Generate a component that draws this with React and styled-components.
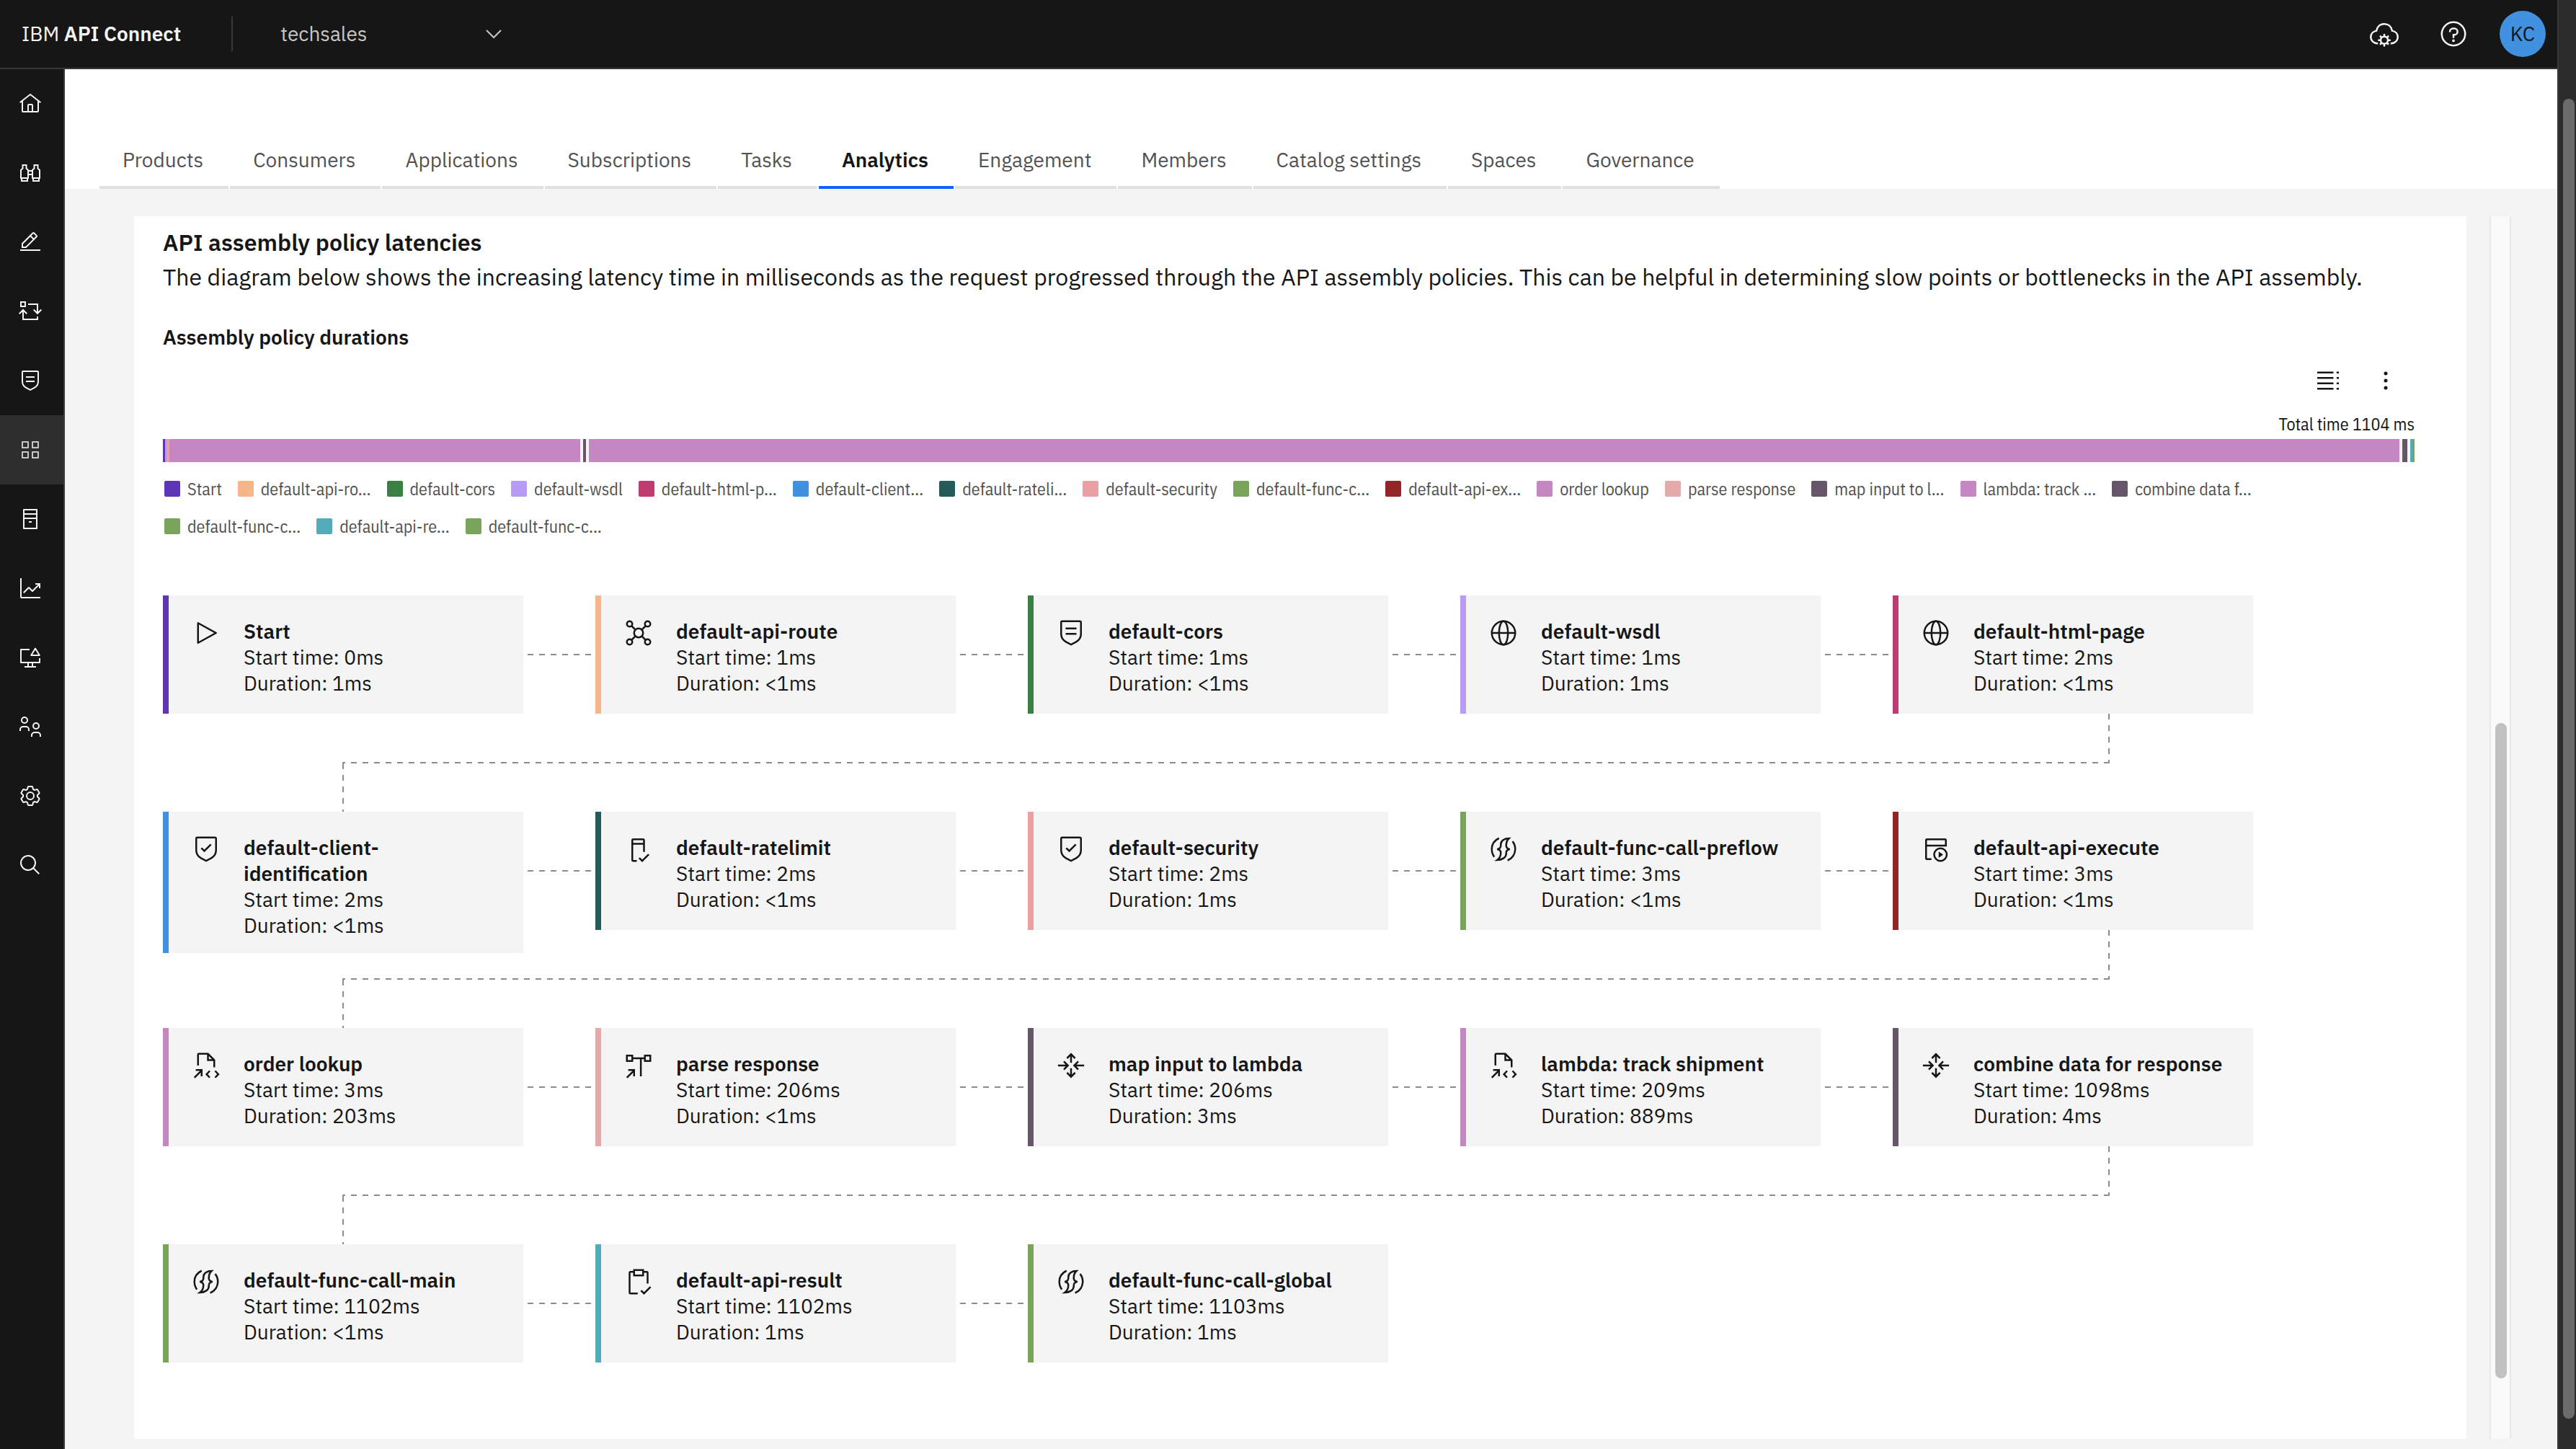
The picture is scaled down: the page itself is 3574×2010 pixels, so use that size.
import React from 'react';
import styled, { createGlobalStyle, css } from 'styled-components';

const color = {
  ink: '#161616',
  muted: '#525252',
  line: '#8d8d8d',
  surface: '#f4f4f4',
  shellBorder: '#393939',
  accent: '#0f62fe',
};

const condensed = '"IBM Plex Sans Condensed", "Open Sans", "Noto Sans", sans-serif';

const GlobalStyle = createGlobalStyle`
  *, *::before, *::after { box-sizing: border-box; }
  body {
    margin: 0;
    background: ${color.surface};
    color: ${color.ink};
    font-family: "IBM Plex Sans", "Open Sans", "Noto Sans", sans-serif;
    font-size: 28px;
    line-height: 36px;
  }
  button, select { font: inherit; color: inherit; background: none; border: 0; padding: 0; margin: 0; cursor: pointer; }
  h2, h3, p, ul, ol { margin: 0; padding: 0; list-style: none; }
`;

/* ---------- icons ---------- */

const Svg = styled.svg`
  display: block;
  flex: none;
  width: ${(p) => p.$size}px;
  height: ${(p) => p.$size}px;
  fill: none;
  stroke: currentColor;
  stroke-width: 2;
  & .solid { fill: currentColor; stroke: none; }
`;

const shield = (
  <path className="solid" d="M16,30,9.8242,26.7071A10.9819,10.9819,0,0,1,4,17V4A2.0021,2.0021,0,0,1,6,2H26a2.0021,2.0021,0,0,1,2,2V17a10.9819,10.9819,0,0,1-5.8242,9.7071ZM6,4V17a8.9852,8.9852,0,0,0,4.7656,7.9423L16,27.7333l5.2344-2.791A8.9852,8.9852,0,0,0,26,17V4Z" />
);

const icons = {
  home: <path className="solid" d="M16.6123,2.2138a1.01,1.01,0,0,0-1.2427,0L1,13.4194l1.2427,1.5717L4,13.6208V26a2.0041,2.0041,0,0,0,2,2H26a2.0037,2.0037,0,0,0,2-2V13.63L29.7573,15,31,13.4282ZM18,26H14V18h4Zm2,0V18a2.0023,2.0023,0,0,0-2-2H14a2.002,2.002,0,0,0-2,2v8H6V12.0615l10-7.79,10,7.8005V26Z" />,
  binoculars: <path d="M5.5 9.5V5h5v4.5L13 12v11H3V12zM26.500 9.500V5h-5v4.500L19 12v11h10V12zM4 23v4h8v-4M20 23v4h8v-4M13 13h6M13 18h6" />,
  edit: (
    <>
      <path className="solid" d="M2,26H30v2H2z" />
      <path className="solid" d="M25.4,9c.8-.8.8-2,0-2.8l-3.6-3.6c-.8-.8-2-.8-2.8,0L4,17.6V24h6.4ZM20.4,4,24,7.6l-3,3L17.4,7ZM6,22V18.4l10-10L19.6,12l-10,10Z" />
    </>
  ),
  cycle: <path d="M3 3h6v6H3zM13 6h13v13M20.700 13.500l5.300 5.300 5.300-5.300M26 23v4H6V14M.700 19.300L6 14l5.300 5.300" />,
  policy: (
    <>
      {shield}
      <path d="M10 11h12M10 17h12" />
    </>
  ),
  apps: <path strokeLinejoin="round" d="M5 5h8v8H5zM19 5h8v8h-8zM5 19h8v8H5zM19 19h8v8h-8z" />,
  catalog: <path strokeLinejoin="round" d="M7 3h18v26H7zM7 9h18M7 15h18M14 20h4" />,
  analytics: (
    <>
      <path className="solid" d="M4,2H2V28a2,2,0,0,0,2,2H30V28H4Z" />
      <path className="solid" d="M30,9H23v2h3.590L19,18.590,14.710,14.290a1,1,0,0,0-1.420,0L6,21.590,7.410,23,14,16.410l4.290,4.300a1,1,0,0,0,1.420,0L28,12.410V16h2Z" />
    </>
  ),
  monitor: <path strokeLinejoin="round" d="M15 5H3v18h26v-6M23 3.500L17.200 13h11.600zM13 23v6M19 23v6M8 29h16" />,
  users: (
    <>
      <circle cx="8" cy="7" r="4" />
      <circle cx="24" cy="15" r="4" />
      <path d="M2 22v-2a4 4 0 0 1 4-4h4a4 4 0 0 1 4 4v2M18 30v-2a4 4 0 0 1 4-4h4a4 4 0 0 1 4 4v2" />
    </>
  ),
  settings: (
    <>
      <path className="solid" d="M27,16.76c0-.25,0-.5,0-.76s0-.51,0-.77l1.92-1.68A2,2,0,0,0,29.3,11L26.94,7a2,2,0,0,0-1.73-1,2,2,0,0,0-.64.1l-2.43.82a11.35,11.35,0,0,0-1.31-.75l-.51-2.52a2,2,0,0,0-2-1.61H13.64a2,2,0,0,0-2,1.61l-.51,2.52a11.48,11.48,0,0,0-1.32.75L7.43,6.06A2,2,0,0,0,6.79,6,2,2,0,0,0,5.06,7L2.7,11a2,2,0,0,0,.41,2.51L5,15.24c0,.25,0,.5,0,.76s0,.51,0,.77L3.11,18.45A2,2,0,0,0,2.7,21L5.06,25a2,2,0,0,0,1.73,1,2,2,0,0,0,.64-.1l2.43-.82a11.35,11.35,0,0,0,1.31.75l.51,2.52a2,2,0,0,0,2,1.61h4.72a2,2,0,0,0,2-1.61l.51-2.52a11.48,11.48,0,0,0,1.32-.75l2.42.82a2,2,0,0,0,.64.1,2,2,0,0,0,1.73-1L29.3,21a2,2,0,0,0-.41-2.51ZM25.21,24l-3.43-1.16a8.86,8.86,0,0,1-2.71,1.57L18.36,28H13.64l-.71-3.55a9.36,9.36,0,0,1-2.7-1.57L6.79,24,4.43,20l2.72-2.4a8.9,8.9,0,0,1,0-3.13L4.43,12,6.79,8l3.43,1.16a8.86,8.86,0,0,1,2.71-1.57L13.64,4h4.72l.71,3.55a9.36,9.36,0,0,1,2.7,1.57L25.21,8,27.57,12l-2.72,2.4a8.9,8.9,0,0,1,0,3.13L27.57,20Z" />
      <circle cx="16" cy="16" r="5" />
    </>
  ),
  search: <path className="solid" d="M29,27.5859l-7.5521-7.5521a11.0177,11.0177,0,1,0-1.4141,1.4141L27.5859,29ZM4,13a9,9,0,1,1,9,9A9.01,9.01,0,0,1,4,13Z" />,
  chevron: <path d="M6 11l10 10 10-10" />,
  cloudGear: (
    <>
      <path d="M9 26.500H8.200C4.200 26.500 1 23.500 1 19.500c0-3.600 2.800-6.300 6.300-7C8.100 7.900 11.600 5 16 5s7.900 2.900 8.700 7.500c3.500.7 6.300 3.400 6.300 7 0 4-3.200 7-7.200 7H23" />
      <circle cx="16" cy="23" r="4" />
      <path d="M16 19v-3M16 27v3M12 23H9M20 23h3M13.200 20.200l-2-2M18.800 20.200l2-2M13.200 25.800l-2 2M18.800 25.800l2 2" />
    </>
  ),
  help: (
    <>
      <circle cx="16" cy="16" r="13" />
      <path d="M12 14v-.5A3.500 3.500 0 0 1 15.500 10H17a3.500 3.500 0 0 1 0 7h-1v3.500" />
      <circle className="solid" cx="16" cy="23.500" r="1.500" />
    </>
  ),
  table: <path d="M4 7h18M4 13h18M4 19h18M4 25h18M25.500 7H28M25.500 13H28M25.500 19H28M25.500 25H28" />,
  overflow: (
    <>
      <circle className="solid" cx="16" cy="8" r="2" />
      <circle className="solid" cx="16" cy="16" r="2" />
      <circle className="solid" cx="16" cy="24" r="2" />
    </>
  ),
  play: <path className="solid" d="M7,28a1,1,0,0,1-1-1V5a1,1,0,0,1,1.4819-.8763l20,11a1,1,0,0,1,0,1.7525l-20,11A1.0005,1.0005,0,0,1,7,28ZM8,6.6909V25.3088L24.9248,16Z" />,
  hub: (
    <>
      <circle cx="16" cy="16" r="5" />
      <circle cx="6" cy="6" r="3" />
      <circle cx="26" cy="6" r="3" />
      <circle cx="6" cy="26" r="3" />
      <circle cx="26" cy="26" r="3" />
      <path d="M8.200 8.200l4.300 4.300M23.800 8.200l-4.300 4.300M8.200 23.800l4.300-4.300M23.800 23.800l-4.300-4.300" />
    </>
  ),
  globe: (
    <>
      <circle cx="16" cy="16" r="13" />
      <ellipse cx="16" cy="16" rx="5" ry="13" />
      <path d="M3 16h26" />
    </>
  ),
  shieldCheck: (
    <>
      {shield}
      <path d="M10.700 14.700l3.300 3.300 7.300-7.300" />
    </>
  ),
  rateLimit: <path d="M14 29h-4a1 1 0 0 1-1-1V6a1 1 0 0 1 1-1h11a1 1 0 0 1 1 1v13M9 10h13M16.700 25.700l3.300 3.300 7.300-7.300" />,
  execute: (
    <>
      <path d="M11 27H6a1 1 0 0 1-1-1V6a1 1 0 0 1 1-1h20a1 1 0 0 1 1 1v5.500M5 12h23" />
      <circle cx="21" cy="22" r="7" />
      <path className="solid" d="M19 18.500v7l5-3.500z" />
    </>
  ),
  func: (
    <path d="M11 3.800C6.200 6 3 10.500 3 16c0 3.200 1 6.200 2.800 8.500M22 4c-5 0-9 2.500-9 6.500V12c0 2.300-1.500 3.600-4 4 2.500.4 4 1.500 4 3.800 0 3.700-1 6.200-4 8.200 5 0 10-2.500 10-7.500V20c0-2.300 1.500-3.600 4-4-2.500-.4-4-1.700-4-4 0-3.500.7-6 3-8zM26 7.300c1.900 2.300 3 5.300 3 8.700 0 5.600-3.500 10.500-8.500 12.400" />
  ),
  invoke: <path d="M7 16V4a1 1 0 0 1 1-1h10l7 7v8M18 3v7h7M3 29.500l8-8M4.500 21H11v7M20 22l-3.500 3.700L20 29.400M26 22l3.500 3.700L26 29.400" />,
  parse: <path d="M3 5h6v6H3zM23 5h6v6h-6zM9 8h14M18.500 8v20M3 29.500l8-8M4.500 21H11v7" />,
  map: <path d="M16 13V4M11.500 8L16 3.500 20.500 8M16 19v9M11.500 24l4.500 4.500 4.500-4.500M1.500 16H12M8 11.500l4.500 4.500L8 20.500M30.500 16H20M24 11.500L19.500 16l4.500 4.500" />,
  result: <path d="M10 5H7a1 1 0 0 0-1 1v22a1 1 0 0 0 1 1h8M22 5h3a1 1 0 0 1 1 1v12M11 3h10v6H11zM18.700 25.700l3.300 3.300 7.300-7.300" />,
};

const Icon = ({ name, size = 40 }) => (
  <Svg viewBox="0 0 32 32" $size={size} aria-hidden="true">
    {icons[name]}
  </Svg>
);

/* ---------- shell ---------- */

const Page = styled.div`
  display: flex;
  min-height: 100vh;
`;

const Shell = styled.div`
  flex: 1;
  min-width: 0;
  display: flex;
  flex-direction: column;
`;

const PageScroll = styled.div`
  width: 26px;
  display: flex;
  padding: 137px 2px 42px 6px;
  background: #2c2c2c;
  border-left: 2px solid ${color.shellBorder};
`;

const PageThumb = styled.div`
  flex: 1;
  border-radius: 8px;
  background: #6b6b6b;
`;

const Header = styled.header`
  display: flex;
  align-items: center;
  height: 96px;
  background: ${color.ink};
  border-bottom: 2px solid ${color.shellBorder};
  color: ${color.surface};
`;

const Brand = styled.a`
  padding: 0 70px 0 30px;
  color: inherit;
  text-decoration: none;
  white-space: nowrap;
  & strong { font-weight: 600; }
`;

const OrgPicker = styled.label`
  display: grid;
  align-items: center;
  width: 396px;
  height: 48px;
  padding: 0 16px 0 66px;
  border-left: 2px solid ${color.shellBorder};
  color: #c6c6c6;
  & > * { grid-area: 1 / 1; }
  & > svg { justify-self: end; pointer-events: none; }
`;

const OrgSelect = styled.select`
  appearance: none;
  width: 100%;
  outline: none;
`;

const HeaderActions = styled.div`
  display: flex;
  margin-left: auto;
`;

const HeaderButton = styled.button`
  display: grid;
  place-items: center;
  width: 96px;
  height: 94px;
`;

const Avatar = styled.span`
  display: grid;
  place-items: center;
  width: 64px;
  height: 64px;
  border-radius: 50%;
  background: #4191e1;
  color: ${color.ink};
`;

const Body = styled.div`
  flex: 1;
  display: flex;
`;

const SideNav = styled.nav`
  width: 90px;
  background: ${color.ink};
  border-right: 2px solid ${color.shellBorder};
`;

const SideLink = styled.a`
  display: flex;
  align-items: center;
  height: 96px;
  padding-left: 26px;
  color: ${(p) => (p.$active ? '#c6c6c6' : '#f4f4f4')};
  background: ${(p) => (p.$active ? '#2e2e2e' : 'transparent')};
`;

const Content = styled.main`
  flex: 1;
  min-width: 0;
  display: flex;
  flex-direction: column;
`;

const TabBar = styled.div`
  display: flex;
  align-items: flex-end;
  gap: 2px;
  height: 166px;
  padding-left: 48px;
  background: #fff;
`;

const Tab = styled.button`
  padding: 0 35px 18px 32px;
  border-bottom: 4px solid #e0e0e0;
  color: ${color.muted};
  white-space: nowrap;
  ${(p) => p.$active && css`
    border-color: ${color.accent};
    color: ${color.ink};
    font-weight: 600;
  `}
`;

const Workspace = styled.div`
  flex: 1;
  display: flex;
  gap: 32px;
  padding: 38px 64px 14px 96px;
`;

const Panel = styled.section`
  flex: 1;
  min-width: 0;
  padding: 12px 72px 106px 40px;
  background: #fff;
`;

const PanelScroll = styled.div`
  width: 30px;
  display: flex;
  padding: 703px 4px 84px 6px;
  background: #fafafa;
  border: solid #e8e8e8;
  border-width: 0 2px;
`;

const PanelThumb = styled.div`
  flex: 1;
  border-radius: 8px;
  background: #c1c1c1;
`;

/* ---------- panel ---------- */

const Title = styled.h2`
  font-size: 32px;
  line-height: 48px;
  font-weight: 600;
`;

const Description = styled.p`
  font-size: 32px;
  line-height: 48px;
`;

const ChartTitle = styled.h3`
  margin-top: 42px;
  font-size: 28px;
  font-weight: 600;
`;

const ChartTools = styled.div`
  display: flex;
  justify-content: flex-end;
  margin-top: 2px;
`;

const ToolButton = styled.button`
  display: grid;
  place-items: center;
  width: 80px;
  height: 80px;
`;

const TotalTime = styled.p`
  font-family: ${condensed};
  font-size: 24px;
  line-height: 41px;
  text-align: right;
`;

const Bar = styled.div`
  display: flex;
  height: 32px;
  background: ${color.surface};
`;

const Segment = styled.div`
  flex: ${(p) => (p.$grow ? `${p.$grow} 1 0` : `0 0 ${p.$px}px`)};
  background: ${(p) => p.$color};
`;

const Legend = styled.ul`
  display: flex;
  flex-wrap: wrap;
  gap: 20px 22px;
  margin-top: 21px;
  padding: 0 160px 0 2px;
`;

const LegendItem = styled.li`
  display: flex;
  align-items: center;
  gap: 10px;
  font-family: ${condensed};
  font-size: 24px;
  line-height: 32px;
  color: ${color.muted};
  white-space: nowrap;
  &::before {
    content: "";
    width: 22px;
    height: 22px;
    border-radius: 2px;
    background: ${(p) => p.$color};
  }
`;

const Flow = styled.div`
  margin-top: 80px;
`;

const FlowRow = styled.div`
  display: flex;
  align-items: flex-start;
  height: 164px;
`;

const Card = styled.article`
  flex: none;
  display: flex;
  align-items: flex-start;
  gap: 32px;
  width: 500px;
  min-height: 164px;
  padding: 32px 36px 20px 32px;
  border-left: 8px solid ${(p) => p.$color};
  background: ${color.surface};
`;

const CardText = styled.div`
  flex: 1;
  min-width: 0;
`;

const CardName = styled.h3`
  font-size: 28px;
  font-weight: 600;
`;

const Link = styled.div`
  width: 88px;
  height: 2px;
  margin: 81px 6px 0;
  background: repeating-linear-gradient(to right, ${color.line} 0 8px, transparent 8px 16px);
`;

const Elbow = styled.div`
  display: flex;
  flex-direction: column;
  width: 2701px;
  height: 136px;
  padding-left: 249px;
`;

const ElbowDrop = styled.div`
  align-self: ${(p) => (p.$end ? 'flex-end' : 'flex-start')};
  flex: 1;
  width: 2px;
  background: repeating-linear-gradient(to bottom, ${color.line} 0 8px, transparent 8px 16px);
`;

const ElbowRun = styled.div`
  height: 2px;
  background: repeating-linear-gradient(to left, ${color.line} 0 8px, transparent 8px 16px);
`;

/* ---------- data ---------- */

const nav = [
  ['home', 'Home'],
  ['binoculars', 'Discover'],
  ['edit', 'Develop'],
  ['cycle', 'Lifecycle'],
  ['policy', 'Policies'],
  ['apps', 'Manage'],
  ['catalog', 'Catalog'],
  ['analytics', 'Analytics'],
  ['monitor', 'Monitor'],
  ['users', 'Members'],
  ['settings', 'Settings'],
  ['search', 'Search'],
];

const tabs = ['Products', 'Consumers', 'Applications', 'Subscriptions', 'Tasks', 'Analytics', 'Engagement', 'Members', 'Catalog settings', 'Spaces', 'Governance'];

const c = {
  purple: '#5f35b8',
  peach: '#f5b78a',
  green: '#3b8043',
  lavender: '#b79bf7',
  magenta: '#bf3a6f',
  blue: '#4191e1',
  teal: '#245c5a',
  pink: '#e8a0a3',
  leaf: '#79a55a',
  red: '#932526',
  plum: '#c587c2',
  rose: '#e6a9a9',
  slate: '#66566a',
  cyan: '#54abb9',
};

const segments = [
  { px: 3, color: c.purple },
  { px: 3, color: c.lavender },
  { px: 3, color: c.pink },
  { grow: 570, color: c.plum },
  { px: 4, color: 'transparent' },
  { px: 4, color: c.slate },
  { px: 4, color: 'transparent' },
  { grow: 2512, color: c.plum },
  { px: 4, color: 'transparent' },
  { px: 7, color: c.slate },
  { px: 4, color: 'transparent' },
  { px: 3, color: c.cyan },
  { px: 3, color: c.leaf },
];

const policies = [
  { name: 'Start', legend: 'Start', color: c.purple, icon: 'play', start: '0', duration: '1' },
  { name: 'default-api-route', legend: 'default-api-ro...', color: c.peach, icon: 'hub', start: '1', duration: '<1' },
  { name: 'default-cors', legend: 'default-cors', color: c.green, icon: 'policy', start: '1', duration: '<1' },
  { name: 'default-wsdl', legend: 'default-wsdl', color: c.lavender, icon: 'globe', start: '1', duration: '1' },
  { name: 'default-html-page', legend: 'default-html-p...', color: c.magenta, icon: 'globe', start: '2', duration: '<1' },
  { name: 'default-client-identification', legend: 'default-client...', color: c.blue, icon: 'shieldCheck', start: '2', duration: '<1' },
  { name: 'default-ratelimit', legend: 'default-rateli...', color: c.teal, icon: 'rateLimit', start: '2', duration: '<1' },
  { name: 'default-security', legend: 'default-security', color: c.pink, icon: 'shieldCheck', start: '2', duration: '1' },
  { name: 'default-func-call-preflow', legend: 'default-func-c...', color: c.leaf, icon: 'func', start: '3', duration: '<1' },
  { name: 'default-api-execute', legend: 'default-api-ex...', color: c.red, icon: 'execute', start: '3', duration: '<1' },
  { name: 'order lookup', legend: 'order lookup', color: c.plum, icon: 'invoke', start: '3', duration: '203' },
  { name: 'parse response', legend: 'parse response', color: c.rose, icon: 'parse', start: '206', duration: '<1' },
  { name: 'map input to lambda', legend: 'map input to l...', color: c.slate, icon: 'map', start: '206', duration: '3' },
  { name: 'lambda: track shipment', legend: 'lambda: track ...', color: c.plum, icon: 'invoke', start: '209', duration: '889' },
  { name: 'combine data for response', legend: 'combine data f...', color: c.slate, icon: 'map', start: '1098', duration: '4' },
  { name: 'default-func-call-main', legend: 'default-func-c...', color: c.leaf, icon: 'func', start: '1102', duration: '<1' },
  { name: 'default-api-result', legend: 'default-api-re...', color: c.cyan, icon: 'result', start: '1102', duration: '1' },
  { name: 'default-func-call-global', legend: 'default-func-c...', color: c.leaf, icon: 'func', start: '1103', duration: '1' },
];

const rows = [0, 5, 10, 15].map((i) => policies.slice(i, i + 5));

/* ---------- views ---------- */

const PolicyCard = ({ policy }) => (
  <Card $color={policy.color}>
    <Icon name={policy.icon} />
    <CardText>
      <CardName>{policy.name}</CardName>
      <p>Start time: {policy.start}ms</p>
      <p>Duration: {policy.duration}ms</p>
    </CardText>
  </Card>
);

const PolicyFlow = () => (
  <Flow>
    {rows.map((row, r) => (
      <React.Fragment key={r}>
        {r > 0 && (
          <Elbow>
            <ElbowDrop $end />
            <ElbowRun />
            <ElbowDrop />
          </Elbow>
        )}
        <FlowRow>
          {row.map((policy, i) => (
            <React.Fragment key={policy.name}>
              {i > 0 && <Link />}
              <PolicyCard policy={policy} />
            </React.Fragment>
          ))}
        </FlowRow>
      </React.Fragment>
    ))}
  </Flow>
);

export default function App() {
  return (
    <Page>
      <GlobalStyle />
      <Shell>
        <Header>
          <Brand href="#home">IBM <strong>API Connect</strong></Brand>
          <OrgPicker>
            <OrgSelect aria-label="Provider organization" defaultValue="techsales">
              <option>techsales</option>
            </OrgSelect>
            <Icon name="chevron" size={32} />
          </OrgPicker>
          <HeaderActions>
            <HeaderButton aria-label="Cloud settings"><Icon name="cloudGear" /></HeaderButton>
            <HeaderButton aria-label="Help"><Icon name="help" /></HeaderButton>
            <HeaderButton aria-label="Account"><Avatar>KC</Avatar></HeaderButton>
          </HeaderActions>
        </Header>
        <Body>
          <SideNav aria-label="Main">
            {nav.map(([name, label]) => (
              <SideLink key={name} href={`#${name}`} aria-label={label} $active={name === 'apps'}>
                <Icon name={name} size={32} />
              </SideLink>
            ))}
          </SideNav>
          <Content>
            <TabBar role="tablist">
              {tabs.map((label) => (
                <Tab key={label} role="tab" aria-selected={label === 'Analytics'} $active={label === 'Analytics'}>
                  {label}
                </Tab>
              ))}
            </TabBar>
            <Workspace>
              <Panel>
                <Title>API assembly policy latencies</Title>
                <Description>
                  The diagram below shows the increasing latency time in milliseconds as the request progressed through the API assembly policies. This can be helpful in determining slow points or bottlenecks in the API assembly.
                </Description>
                <ChartTitle>Assembly policy durations</ChartTitle>
                <ChartTools>
                  <ToolButton aria-label="Show as table"><Icon name="table" /></ToolButton>
                  <ToolButton aria-label="More options"><Icon name="overflow" /></ToolButton>
                </ChartTools>
                <TotalTime>Total time 1104 ms</TotalTime>
                <Bar>
                  {segments.map((s, i) => (
                    <Segment key={i} $grow={s.grow} $px={s.px} $color={s.color} />
                  ))}
                </Bar>
                <Legend>
                  {policies.map((p) => (
                    <LegendItem key={p.name} $color={p.color}>{p.legend}</LegendItem>
                  ))}
                </Legend>
                <PolicyFlow />
              </Panel>
              <PanelScroll>
                <PanelThumb />
              </PanelScroll>
            </Workspace>
          </Content>
        </Body>
      </Shell>
      <PageScroll>
        <PageThumb />
      </PageScroll>
    </Page>
  );
}
